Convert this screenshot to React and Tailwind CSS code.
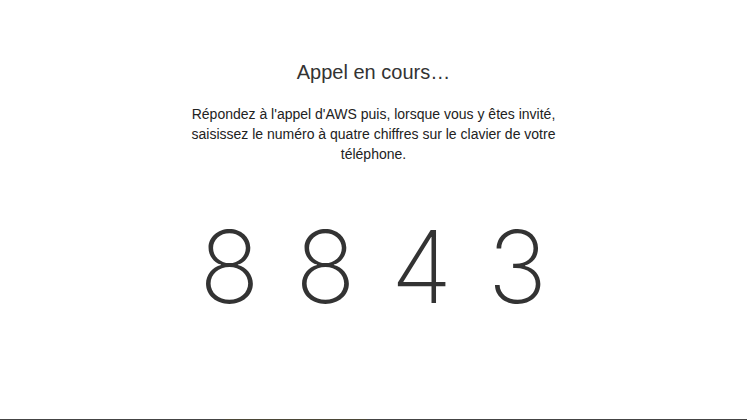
export default function App() {
    const code = ["8", "8", "4", "3"];

    return (
        <div className="w-full h-[420px] bg-white flex flex-col font-['Liberation_Sans',Arial,sans-serif] text-[#333]">
            <div className="flex-1 flex flex-col items-center">
                <h1 className="mt-[59px] text-[20px] leading-[26px] text-[#333]">Appel en cours…</h1>
                <p className="mt-[19px] w-[390px] text-center text-[14px] leading-[20px] text-[#222]">
                    Répondez à l'appel d'AWS puis, lorsque vous y êtes invité, saisissez le numéro à quatre chiffres sur le clavier de votre téléphone.
                </p>
                <div className="mt-[53px] flex font-['Inter',sans-serif] font-extralight text-[100px] leading-[100px] text-[#333]">
                    {code.map((digit, i) => (
                        <span key={i} className="w-[96px] text-center">{digit}</span>
                    ))}
                </div>
            </div>
            <div className="h-px bg-[#444] flex">
                <div className="ml-[225px] w-[142px] bg-[#4a4636]"></div>
            </div>
        </div>
    );
}
